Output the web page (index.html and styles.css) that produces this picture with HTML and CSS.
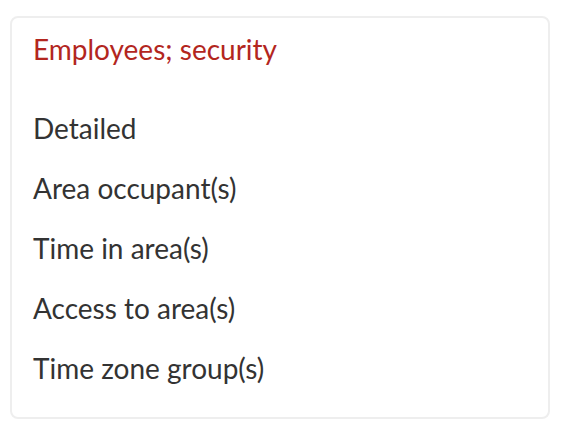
FILE: index.html
```html
<!DOCTYPE html>
<html>
<head>
<meta charset="utf-8">
<link rel="stylesheet" href="styles.css">
</head>
<body>
<div class="card">
  <h2 class="title">Employees; security</h2>
  <ul class="list">
    <li>Detailed</li>
    <li>Area occupant(s)</li>
    <li>Time in area(s)</li>
    <li>Access to area(s)</li>
    <li>Time zone group(s)</li>
  </ul>
</div>
</body>
</html>
```
FILE: styles.css
```css
html, body { background: #fff; }
body {
  margin: 16px 12px 0 10px;
  font-family: Lato, "Open Sans", sans-serif;
  color: #333;
}
.card {
  border: 2px solid #eeeeee;
  border-radius: 8px;
  padding: 16px 20px 19px 21px;
}
.title {
  margin: 0;
  font-weight: 400;
  font-size: 28px;
  line-height: 30px;
  color: #b3261e;
}
.list {
  list-style: none;
  margin: 49px 0 0;
  padding: 0;
}
.list li {
  font-size: 28px;
  line-height: 30px;
  padding: 15px 0;
}
.list li:first-child { padding-top: 0; }
```
